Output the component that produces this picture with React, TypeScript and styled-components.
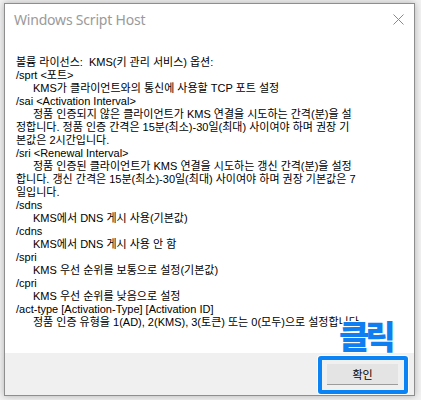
import React from 'react';
import styled, { createGlobalStyle } from 'styled-components';

interface ILine {
  text: string;
  indent?: boolean;
}

const GlobalStyle = createGlobalStyle`
  html, body {
    margin: 0;
    padding: 0;
    background: #f2f2f2;
  }

  body {
    font-family: "Liberation Sans", "Noto Sans CJK KR", sans-serif;
  }
`;

const Screen = styled.div`
  width: 421px;
  height: 400px;
  padding: 3px 0 0 4px;
  box-sizing: border-box;
`;

const Window = styled.div`
  width: 411px;
  height: 393px;
  box-sizing: border-box;
  border: 1px solid #8e8e8e;
  background: white;
  box-shadow: 0 0 7px rgba(0, 0, 0, 0.28);
  display: flex;
  flex-direction: column;
`;

const TitleBar = styled.div`
  height: 29px;
  flex: none;
  display: flex;
  align-items: center;
  justify-content: space-between;
  padding: 0 9px 0 9px;
`;

const Title = styled.span`
  font-family: "Noto Sans", "Liberation Sans", sans-serif;
  font-size: 14px;
  color: #9a9a9a;
  letter-spacing: -0.2px;
  padding-top: 2px;
`;

const CloseIcon = styled.svg`
  width: 11px;
  height: 11px;
  margin-right: 1px;
  margin-top: 1px;
`;

const Content = styled.div`
  flex: 1;
  padding: 23px 0 0 11px;
`;

const TextLine = styled.div<{ $indent?: boolean }>`
  font-size: 11px;
  line-height: 13px;
  height: 13px;
  color: #000;
  white-space: pre;
  padding-left: ${p => (p.$indent ? '17px' : '0')};
`;

const Footer = styled.div`
  height: 42px;
  flex: none;
  background: #f0f0f0;
  display: flex;
  align-items: center;
  justify-content: flex-end;
  padding-right: 16px;
`;

const ButtonWrap = styled.div`
  position: relative;
`;

const Button = styled.button`
  width: 71px;
  height: 21px;
  box-sizing: border-box;
  border: none;
  border-bottom: 1px solid #9c9c9c;
  background: #e4e4e4;
  font-family: "Liberation Sans", "Noto Sans CJK KR", sans-serif;
  font-size: 11px;
  color: #000;
  padding: 0;
  display: block;
`;

// annotation drawn over the dialog
const Highlight = styled.div`
  position: absolute;
  left: -9px;
  top: -8px;
  right: -10px;
  bottom: -9px;
  border: 4px solid #0a84f4;
  border-radius: 3px;
  box-shadow: 0 0 0 1px white;
  pointer-events: none;
`;

const ClickLabel = styled.span`
  position: absolute;
  left: 12px;
  top: -47px;
  font-family: "Noto Sans CJK KR", sans-serif;
  font-weight: 900;
  font-size: 33px;
  line-height: 36px;
  letter-spacing: -4px;
  color: #0f7ef0;
  text-shadow: 1px 0 0 #fff, -1px 0 0 #fff, 0 1px 0 #fff, 0 -1px 0 #fff;
  white-space: nowrap;
`;

const lines: ILine[] = [
  { text: '볼륨 라이선스:  KMS(키 관리 서비스) 옵션:' },
  { text: '/sprt <포트>' },
  { text: 'KMS가 클라이언트와의 통신에 사용할 TCP 포트 설정', indent: true },
  { text: '/sai <Activation Interval>' },
  { text: '정품 인증되지 않은 클라이언트가 KMS 연결을 시도하는 간격(분)을 설', indent: true },
  { text: '정합니다. 정품 인증 간격은 15분(최소)-30일(최대) 사이여야 하며 권장 기' },
  { text: '본값은 2시간입니다.' },
  { text: '/sri <Renewal Interval>' },
  { text: '정품 인증된 클라이언트가 KMS 연결을 시도하는 갱신 간격(분)을 설정', indent: true },
  { text: '합니다. 갱신 간격은 15분(최소)-30일(최대) 사이여야 하며 권장 기본값은 7' },
  { text: '일입니다.' },
  { text: '/sdns' },
  { text: 'KMS에서 DNS 게시 사용(기본값)', indent: true },
  { text: '/cdns' },
  { text: 'KMS에서 DNS 게시 사용 안 함', indent: true },
  { text: '/spri' },
  { text: 'KMS 우선 순위를 보통으로 설정(기본값)', indent: true },
  { text: '/cpri' },
  { text: 'KMS 우선 순위를 낮음으로 설정', indent: true },
  { text: '/act-type [Activation-Type] [Activation ID]' },
  { text: '정품 인증 유형을 1(AD), 2(KMS), 3(토큰) 또는 0(모두)으로 설정합니다.', indent: true },
];

const App = () => {
  return (
    <Screen>
      <GlobalStyle />
      <Window>
        <TitleBar>
          <Title>Windows Script Host</Title>
          <CloseIcon viewBox="0 0 11 11">
            <path d="M0.5 0.5 L10.5 10.5 M10.5 0.5 L0.5 10.5" stroke="#8a8a8a" strokeWidth="1" fill="none" />
          </CloseIcon>
        </TitleBar>
        <Content>
          {lines.map((line, i) => (
            <TextLine key={i} $indent={line.indent}>{line.text}</TextLine>
          ))}
        </Content>
        <Footer>
          <ButtonWrap>
            <ClickLabel>클릭</ClickLabel>
            <Button>확인</Button>
            <Highlight />
          </ButtonWrap>
        </Footer>
      </Window>
    </Screen>
  );
};

export default App;
